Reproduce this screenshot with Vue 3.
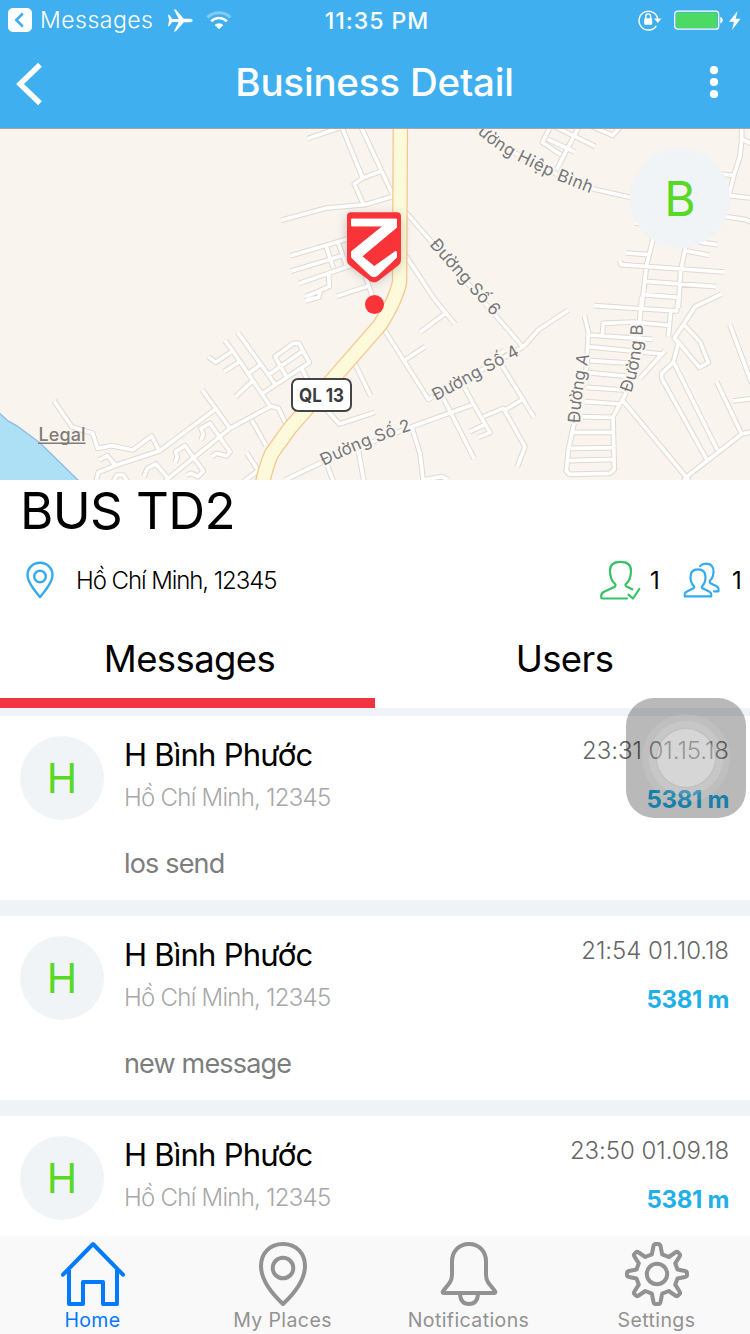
<script setup>
// Road geometry is grouped by map tile; each tile uses three units per pixel.
const tiles = [
  {
    at: 'translate(180 128) scale(.33333)',
    d: 'M382,32 L485,-3 M485,-4 L548,150 M543,-4 L640,205 M603,130 L548,150 L523,168 L550,228 M303,277 L440,240 L555,230 L640,205 M332,383 L505,332 M332,430 L490,382 M355,467 L515,412 M437,350 L460,420 M473,340 L500,415 M445,430 L448,475 L415,490 L378,505 M378,518 L416,508 L420,490 M470,505 L563,475 M555,440 L582,520 M675,250 L1029,657 M675,380 L765,516'
  },
  {
    at: 'translate(460 128) scale(.33333)',
    d: 'M40,-10 L170,78 L290,138 L400,183 L520,210 M272,-5 L247,43 L303,80 M262,33 L345,72 M357,-5 L290,125 M285,-4 L405,55 M395,-5 L458,22 L482,-5 M845,-5 L845,35 L840,85 L822,140 L806,205 M845,33 L875,48 M780,138 L825,143 M800,202 L875,210 M790,265 L858,275 L875,283 M525,285 L545,287 M580,330 L560,410 L545,540 M498,375 L565,380 M480,397 L483,410 L792,432 M555,460 L768,476 M548,500 L655,508 M677,355 L662,430 L655,540 M675,368 L748,382 M715,342 L773,350'
  },
  {
    at: 'translate(0 300) scale(.33333)',
    d: 'M713,97 L825,252 M675,122 L700,155 L810,318 L835,325 L862,380 M625,170 L647,187 L700,152 M672,215 L718,185 M748,218 L780,195 M707,290 L755,245 M607,270 L692,388 M810,320 L690,385 L505,535 L490,550 M650,325 L478,453 L350,495 L295,517 L288,545 M478,453 L455,408 L398,450 L335,437 L293,445 L278,400 L215,380 L162,302 M755,360 L798,437 M740,458 L775,512 L730,545 M298,480 L322,467 L345,495 M340,545 L350,525 L370,525 L382,545 M432,530 L442,505 L468,492 L508,540 M525,487 L532,472 L527,455 L555,437 L610,513 L593,530 L575,520 L560,524 M603,420 L610,402 L603,385 L630,370 L690,455 L680,468 L650,460 L635,470'
  },
  {
    at: 'translate(230 300) scale(.33333)',
    d: 'M615,0 L675,72 M570,97 L647,40 M225,3 L250,-6 M460,85 L595,298 L879,141 M525,180 L585,140 M372,185 L422,288 M290,330 L328,372 L435,337 M165,540 L290,480 L545,380 L725,315 M635,285 L732,475 M545,380 L570,460 L580,545 M578,540 L635,530 L655,540 M385,450 L402,545 M290,490 L310,545 M115,225 L215,155 M98,280 L238,188 L207,130 L190,130 L135,170 L168,228 M215,205 L238,250 M805,165 L825,150'
  },
  {
    at: 'translate(460 300) scale(.33333)',
    d: 'M190,140 L235,90 L325,30 M373,47 L385,95 L380,200 L340,380 L325,450 L319,513 L328,523 L450,520 L463,508 L459,350 L495,285 L530,180 L545,-10 M385,105 L578,118 M427,105 L430,70 L520,66 L630,76 M402,17 L650,33 L656,-5 M632,35 L625,110 M385,140 L605,162 M615,152 L540,235 M390,182 L520,190 M385,218 L510,230 M380,262 L490,270 M375,305 L480,312 M360,350 L460,352 M340,397 L460,397 M330,445 L460,443 M325,482 L460,478 M487,300 L680,533 M785,-18 L705,20 L643,115 L655,130 L640,187 L605,220 L605,235 L740,478 M650,120 L718,202 L745,188 L720,125 L670,72 M640,185 L772,450 M670,545 L680,530 L845,402 L875,395 M690,550 L680,530 M770,245 L845,402 M810,75 L875,250 M820,303 L875,296 M125,195 L222,352 M190,297 L135,330 M15,265 L40,312 L90,398 L55,412 M72,375 L30,395 M70,350 L130,325 L195,440 L172,500'
  }
]

const labels = [
  { id: 'hiep', text: 'ường Hiệp Bình', d: 'M477,133 Q497,151 519,161.500 L558,180.500 L610,201', len: 129 },
  { id: 'so6', text: 'Đường Số 6', d: 'M429,245 L499,323.5', len: 96 },
  { id: 'so4', text: 'Đường Số 4', d: 'M436,401 L529,350', len: 96 },
  { id: 'so2', text: 'Đường Số 2', d: 'M324,466 Q364,445 422,427', len: 95 },
  { id: 'a', text: 'Đường A', d: 'M580,423 Q581,390 591,348', len: 69 },
  { id: 'b', text: 'Đường B', d: 'M631,393 Q643,362 643,316', len: 70 }
]

const messages = [
  { date: '23:31 01.15.18', text: 'los send' },
  { date: '21:54 01.10.18', text: 'new message' },
  { date: '23:50 01.09.18', text: '' }
]
</script>

<template>
  <div class="screen">
    <header class="header">
      <div class="status">
        <div class="status-left">
          <svg width="24" height="24" viewBox="0 0 24 24"><rect width="24" height="24" rx="5" fill="#fff" /><path d="M14.800 5.500 8.300 12l6.500 6.500" fill="none" stroke="#3fafef" stroke-width="2.600" /></svg>
          <span class="status-app">Messages</span>
          <svg class="plane" width="25" height="23" viewBox="0 0 25 23"><path d="M0 5.800h1.200l3 4.100 6.600.1L5.800.5h1.900l8.100 9.300h6.500q2.500.5 2.500 1.700t-2.500 1.700h-6.500l-8.100 9.300H5.800l5-9.500-6.600.1-3 4.100H0l1.100-5.700z" fill="#fff" /></svg>
          <svg class="wifi" width="26" height="19" viewBox="0 0 26 19" fill="none" stroke="#fff"><path d="M1.500 6.300a16.500 16.500 0 0 1 23 0" stroke-width="3" opacity=".35" /><path d="M5.200 10.300a11 11 0 0 1 15.600 0" stroke-width="2.600" /><path d="M8.700 14a6.200 6.200 0 0 1 8.600 0L13 18.300z" fill="#fff" stroke="none" /></svg>
        </div>
        <span class="clock">11:35 PM</span>
        <div class="status-right">
          <svg width="25" height="22" viewBox="0 0 25 22" fill="none" stroke="#fff"><path d="M18.300 16.800A9.400 9.400 0 1 1 19.800 11" stroke-width="1.400" /><path d="M16 9.600h7.500L19.800 14z" fill="#fff" stroke="none" /><rect x="6.200" y="9.300" width="8" height="6.500" rx=".7" fill="#fff" stroke="none" /><path d="M7.800 9.500V7.300a2.400 2.400 0 0 1 4.800 0v2.200" stroke-width="1.400" /></svg>
          <svg class="battery" width="50" height="20" viewBox="0 0 50 20"><rect x=".7" y="1.200" width="44" height="18" rx="3" fill="none" stroke="#fff" stroke-width="1.300" /><rect x="2" y="2.500" width="41.400" height="15.400" rx="1.500" fill="#4cd964" /><path d="M46.300 6.800q2.400.8 2.400 3.500t-2.400 3.500z" fill="#fff" /></svg>
          <svg class="bolt" width="12" height="19" viewBox="0 0 12 19"><path d="M8.600 0 0 10.800h5L3 19l8.600-11.300H6.700z" fill="#fff" /></svg>
        </div>
      </div>
      <div class="nav">
        <svg class="back" width="27" height="42" viewBox="0 0 27 42"><path d="M24 1.700 4 21l20 19.300" fill="none" stroke="#fff" stroke-width="5.400" /></svg>
        <h1>Business Detail</h1>
        <svg width="10" height="32" viewBox="0 0 10 32" fill="#fff"><circle cx="5" cy="4.200" r="4.100" /><circle cx="5" cy="16" r="4.100" /><circle cx="5" cy="28" r="4.100" /></svg>
      </div>
    </header>

    <section class="map">
      <svg width="750" height="352" viewBox="0 128 750 352">
        <defs>
          <filter id="shade" x="-50%" y="-50%" width="200%" height="200%"><feGaussianBlur stdDeviation="6" /></filter>
          <path v-for="l in labels" :id="'road-' + l.id" :key="l.id" :d="l.d" />
        </defs>
        <rect y="128" width="750" height="352" fill="#f9f4ed" />
        <path d="M-4,410 L8,421 L17,426 L40,443 L84,486 H-4z" fill="#ade0f5" stroke="#91bfe9" stroke-width="1.500" />
        <g class="casing"><path v-for="t in tiles" :key="t.at" :transform="t.at" :d="t.d" /></g>
        <g class="surface"><path v-for="t in tiles" :key="t.at" :transform="t.at" :d="t.d" /></g>
        <g fill="none" stroke-linejoin="round">
          <path d="M400.300,120 V140 L399.600,282 Q396,300 380,325 L290,428 L272,453 Q266,465 261,490" stroke="#f6c58c" stroke-width="15.500" />
          <path d="M400.300,120 V140 L399.600,282 Q396,300 380,325 L290,428 L272,453 Q266,465 261,490" stroke="#fdfadb" stroke-width="13" />
        </g>
        <text v-for="l in labels" :key="l.id" class="road-label" :textLength="l.len"><textPath :href="'#road-' + l.id" :textLength="l.len">{{ l.text }}</textPath></text>
        <rect x="292" y="379" width="59" height="32" rx="6" fill="#fff" stroke="#444446" stroke-width="2" />
        <text class="route" x="299" y="401.700" textLength="45" lengthAdjust="spacingAndGlyphs">QL 13</text>
        <text class="legal" x="38.500" y="441" textLength="47">Legal</text>
        <path d="M38,443.300H85.500" stroke="#7f7c79" stroke-width="1.600" />
        <path d="M347,216h54v48l-27,20-27-20z" fill="#000" opacity=".2" filter="url(#shade)" />
        <path d="M351,212.300h46q4,0 4,4v44q0,3-2.500,5l-20,15.500q-4.500,3-9,0l-20-15.500q-2.500-2-2.500-5v-44q0-4 4-4z" fill="#f93438" />
        <path d="M351.500,219h45v8.500l-34.500,28.800 12.300,10.200 21-15q1.200-.6 1.200,1v5l-19,18q-3.500,2.500-7,0L352.500,258.500q-1-1-1-2.500v-4.500l31.500-25.500H351.500z" fill="#fff" stroke="#fff" stroke-width=".9" stroke-linejoin="round" />
        <circle cx="374.500" cy="304.500" r="9.500" fill="#f93438" />
        <path d="M0,128.500H750" stroke="#a9a5a1" />
      </svg>
      <div class="avatar avatar-map">B</div>
    </section>

    <section class="info">
      <h2>BUS TD2</h2>
      <div class="meta">
        <svg width="28" height="38" viewBox="0 0 28 38" fill="none" stroke="#34aaf0" stroke-width="2.400"><path d="M14 1.800C6.700 1.800 1.500 7.200 1.500 14.200 1.500 22 9.500 30.500 14 36c4.500-5.500 12.500-14 12.500-21.800C26.500 7.200 21.300 1.800 14 1.800z" stroke-linejoin="round" /><circle cx="14" cy="15.500" r="5.800" /></svg>
        <span class="place">Hồ Chí Minh, 12345</span>
        <svg class="ico-user" width="41" height="40" viewBox="0 0 41 40" fill="none" stroke="#37c266" stroke-width="2.200" stroke-linecap="round" stroke-linejoin="round"><path d="M32.300 29.300 26.500 26.500Q24.500 25.500 26.300 23.500 31 19.500 31 10.500 31 1.800 20.500 1.800T10 10.500Q10 19.500 14.700 23.500 16.500 25.500 14.500 27L4 31.700Q1.200 33.300 1.200 36v1.500Q1.200 38.500 2.200 38.500H27" /><path d="M28.500 34.600 33 38.500 39.300 29" /></svg>
        <span class="count">1</span>
        <svg class="ico-users" width="37" height="36" viewBox="0 0 37 36" fill="none" stroke="#34aaf0" stroke-width="2.200" stroke-linecap="round" stroke-linejoin="round"><path d="M7.500 15Q7.500 7.300 15 7.300T22.500 15Q22.500 20.500 19.500 23.700 18 25.500 19.500 26.200L26.500 29.700Q28.300 30.500 28.300 33v1.300H1.700V33Q1.700 30.500 3.500 29.700L10.500 26.200Q12 25.500 10.500 23.700 7.500 20.500 7.500 15z" /><path d="M17 4Q19.500 1.700 23 1.700 30.500 1.700 30.500 9.500 30.500 15 27.500 18 25.500 20.300 28 21.500L34 24.500Q35.500 25.500 35.500 27v2.300H31" /></svg>
        <span class="count last">1</span>
      </div>
      <nav class="tabs">
        <div class="tab active">Messages</div>
        <div class="tab">Users</div>
      </nav>
    </section>

    <main class="list">
      <article v-for="m in messages" :key="m.date" class="card">
        <div class="avatar">H</div>
        <div class="body">
          <div class="name">H Bình Phước</div>
          <div class="addr">Hồ Chí Minh, 12345</div>
          <div class="text">{{ m.text }}</div>
        </div>
        <div class="side">
          <div class="date">{{ m.date }}</div>
          <div class="dist">5381 m</div>
        </div>
      </article>
    </main>

    <footer class="tabbar">
      <div class="item on">
        <svg width="66" height="66" viewBox="0 0 66 66" fill="none" stroke="currentColor" stroke-width="4" stroke-linecap="round" stroke-linejoin="round"><path d="M3 33.700 33 3 63 33.700M9 29V63H23V41H43V63H57V29" /></svg>
        <span>Home</span>
      </div>
      <div class="item places">
        <svg width="66" height="66" viewBox="0 0 66 66" fill="none" stroke="currentColor" stroke-width="4" stroke-linejoin="round"><path d="M33 3C19.500 3 11 12.500 11 25 11 40 25 55.500 33 63 41 55.500 55 40 55 25 55 12.500 46.500 3 33 3z" /><circle cx="33" cy="27" r="10.300" /></svg>
        <span>My Places</span>
      </div>
      <div class="item bell">
        <svg width="66" height="66" viewBox="0 0 66 66" fill="none" stroke="currentColor" stroke-width="4" stroke-linejoin="round"><path d="M33 3C22.500 3 16 11 16 20.500V34Q16 38.500 13.500 42L7.500 49.500Q5.500 52 8 52H58Q60.500 52 58.500 49.500L52.500 42Q50 38.500 50 34V20.500C50 11 43.500 3 33 3zM24 52.500Q24.300 63 33 63T42 52.500" /></svg>
        <span>Notifications</span>
      </div>
      <div class="item">
        <svg width="66" height="66" viewBox="0 0 66 66" fill="none" stroke="currentColor" stroke-width="4" stroke-linejoin="round"><path d="M29.500 5Q30 3 31.500 3h3Q36 3 36.500 5L38.200 13.300 44.700 16 51.300 11.500Q53 10.300 54.300 11.600L55.500 12.800Q56.700 14 55.500 15.700L51.200 22.300 53.500 28.500 61 30Q63 30.500 63 32v2Q63 35.500 61 36L53.500 37.500 51.200 43.700 55.500 50.300Q56.700 52 55.500 53.200L54.300 54.400Q53 55.700 51.300 54.500L44.700 50 38.200 52.700 36.500 61Q36 63 34.500 63h-3Q30 63 29.500 61L27.800 52.700 21.300 50 14.700 54.500Q13 55.700 11.700 54.400L10.500 53.200Q9.300 52 10.500 50.300L14.800 43.700 12.500 37.500 5 36Q3 35.500 3 34v-2Q3 30.500 5 30L12.500 28.500 14.800 22.300 10.500 15.700Q9.300 14 10.500 12.800L11.700 11.600Q13 10.300 14.700 11.500L21.300 16 27.800 13.300z" /><circle cx="33" cy="33" r="10.200" /></svg>
        <span>Settings</span>
      </div>
    </footer>

    <div class="assist"><i class="ring"></i><i class="ring mid"></i><i class="ring core"></i></div>
  </div>
</template>

<style>
body { margin: 0; background: #fff; }
</style>

<style scoped>
.screen { position: relative; display: flex; flex-direction: column; width: 750px; height: 1334px; overflow: hidden; background: #fff; color: #000; font-family: Inter, "Noto Sans", sans-serif; font-feature-settings: "calt" 0; white-space: nowrap; }
svg { display: block; flex: none; }
h1, h2 { margin: 0; }
.header { height: 128px; flex: none; background: #3fafef; color: #fff; }
.status { display: grid; grid-template-columns: 1fr auto 1fr; align-items: center; height: 40px; padding: 0 9px 0 8px; }
.status-left, .status-right { display: flex; align-items: center; }
.status-right { justify-content: flex-end; }
.status-app { width: 113px; margin-left: 8px; font-size: 23px; font-weight: 300; letter-spacing: .5px; }
.plane { margin-left: 15px; }
.wifi { margin-left: 13px; }
.clock { font-size: 23px; font-weight: 500; letter-spacing: 1px; padding: 1px 0 0 5px; }
.battery { margin-left: 11px; }
.bolt { margin-left: 5px; }
.nav { display: flex; align-items: center; justify-content: space-between; height: 84px; padding: 0 31px 0 16px; }
.back { margin-top: 4px; }
.nav h1 { width: 660px; margin-left: -3px; text-align: center; font-size: 38.500px; font-weight: 500; letter-spacing: -.2px; }
.map { position: relative; height: 352px; flex: none; }
.casing, .surface { fill: none; stroke-linejoin: round; }
.casing { stroke: #dfd9d0; stroke-width: 17px; }
.surface { stroke: #fff; stroke-width: 11px; }
.road-label { font-size: 17px; font-weight: 400; fill: #77777b; stroke: #faf6f0; stroke-width: 4px; paint-order: stroke; stroke-linejoin: round; }
.route { font-size: 19px; font-weight: 700; fill: #3c3c3e; }
.legal { font-size: 18px; font-weight: 500; fill: #7f7c79; }
.avatar { display: flex; align-items: center; justify-content: center; flex: none; width: 84px; height: 84px; border-radius: 50%; background: #f0f4f6; color: #57d926; font-size: 41px; }
.avatar-map { position: absolute; top: 20px; left: 630px; width: 100px; height: 100px; font-size: 48px; }
.info { flex: none; height: 236px; background: #fff; }
.info h2 { height: 62px; padding-left: 20px; line-height: 62px; font-size: 51px; font-weight: 400; letter-spacing: -.6px; }
.meta { display: flex; align-items: center; height: 76px; padding: 0 6px 0 26px; }
.place { margin-left: 22px; font-size: 24px; font-weight: 300; letter-spacing: -1.080px; flex: 1; }
.count { width: 12px; margin-left: 9px; font-size: 24px; }
.ico-users { margin-left: 21px; }
.count.last { margin-left: 12px; }
.tabs { display: flex; height: 90px; border-bottom: 8px solid #eff3f7; }
.tab { flex: 1; padding-left: 4px; text-align: center; line-height: 82px; font-size: 36.500px; letter-spacing: -.6px; border-bottom: 10px solid transparent; height: 80px; }
.tab.active { border-color: #f23440; }
.list { flex: 1; display: flex; flex-direction: column; gap: 16px; min-height: 0; overflow: hidden; background: #eff3f7; }
.card { display: flex; flex: none; height: 164px; padding: 20px 21px 0 20px; background: #fff; }
.body { flex: 1; margin-left: 20px; }
.name { height: 38px; line-height: 38px; font-size: 31px; letter-spacing: -.75px; }
.addr { height: 48px; line-height: 48px; font-size: 24px; font-weight: 300; letter-spacing: -.74px; color: #a8a8a8; }
.text { margin-top: 22px; line-height: 40px; font-size: 27px; color: #7d7d7d; letter-spacing: -.830px; }
.side { text-align: right; }
.date { height: 29px; line-height: 29px; font-size: 24px; font-weight: 300; color: #666; letter-spacing: -.050px; }
.dist { height: 69px; line-height: 69px; font-size: 24px; font-weight: 700; color: #1fb0ea; letter-spacing: -.3px; }
.tabbar { display: flex; flex: none; height: 98px; padding: 0; background: #f9f9f9; }
.item { display: flex; flex: 1; flex-direction: column; align-items: center; padding-top: 5px; color: #929292; }
.item.on { color: #007aff; }
.item.on, .item.bell { padding-right: 1px; margin-left: -1px; }
.item.places { padding-left: 2px; }
.item span { height: 26px; line-height: 26px; font-size: 19.500px; letter-spacing: .4px; }
.assist { position: absolute; left: 626px; top: 698px; width: 120px; height: 120px; border-radius: 28px; background: rgba(0, 0, 0, .275); }
.ring { position: absolute; inset: 16px; border-radius: 50%; background: rgba(255, 255, 255, .09); }
.ring.mid { inset: 23px; background: rgba(255, 255, 255, .13); }
.ring.core { inset: 31px; background: rgba(255, 255, 255, .27); box-shadow: 0 0 2px rgba(0, 0, 0, .15); }
</style>
